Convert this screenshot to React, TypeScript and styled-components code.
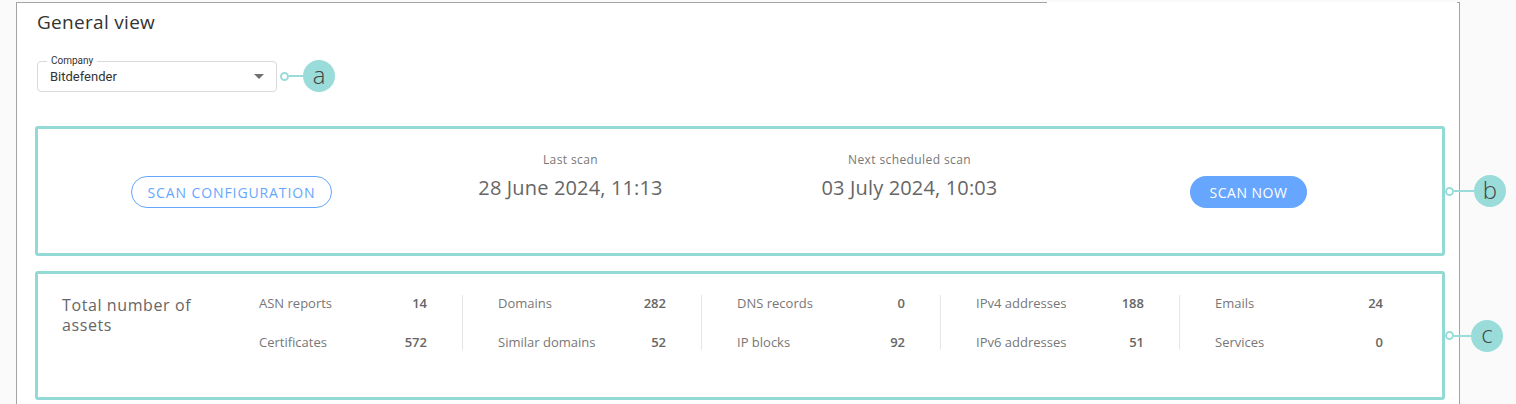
import React from "react";
import styled, { createGlobalStyle } from "styled-components";

const GlobalStyle = createGlobalStyle`
  html, body { margin: 0; padding: 0; background: #fafafa; }
  body { font-family: "Open Sans", "Liberation Sans", sans-serif; }
  * { box-sizing: border-box; }
`;

const Page = styled.div`
  padding: 2px 0 0 16px;
  height: 404px;
  overflow: hidden;
`;

const Panel = styled.section`
  position: relative;
  width: 1444px;
  min-height: 402px;
  background: #fff;
  border-left: 1px solid #a4a4a4;
  border-right: 1px solid #a4a4a4;
  padding: 8px 13px 0 18px;
  &::before {
    content: "";
    position: absolute;
    top: 0;
    left: -1px;
    width: 1031px;
    height: 1px;
    background: #a4a4a4;
  }
  &::after {
    content: "";
    position: absolute;
    top: 0;
    right: -1px;
    width: 3px;
    height: 1px;
    background: #a4a4a4;
  }
`;

const Title = styled.h1`
  margin: 0 0 0 2px;
  font-size: 19px;
  line-height: 24px;
  font-weight: 400;
  letter-spacing: 0.3px;
  color: #333;
`;

const SelectRow = styled.div`
  display: flex;
  align-items: center;
  margin: 26px 0 0 2px;
`;

const SelectBox = styled.div`
  position: relative;
  width: 240px;
  height: 31px;
  border: 1px solid #d9d9d9;
  border-radius: 4px;
  display: flex;
  align-items: center;
  padding: 0 12px;
  font-family: Roboto, "Liberation Sans", sans-serif;
`;

const SelectLabel = styled.span`
  position: absolute;
  top: -7px;
  left: 9px;
  padding: 0 4px;
  background: #fff;
  font-size: 10px;
  line-height: 12px;
  color: #333;
`;

const SelectValue = styled.span`
  flex: 1;
  font-size: 13px;
  color: #333;
  padding-top: 1px;
`;

const Caret = styled.span`
  width: 0;
  height: 0;
  border-left: 5px solid transparent;
  border-right: 5px solid transparent;
  border-top: 5px solid #707070;
`;

const CalloutWrap = styled.div<{ $abs?: boolean }>`
  display: flex;
  align-items: center;
  ${(p) =>
    p.$abs
      ? `position: absolute; left: 100%; top: 50%; transform: translateY(-50%); margin-left: 3px;`
      : `margin-left: 3px;`}
`;

const Dot = styled.span`
  width: 9px;
  height: 9px;
  border-radius: 50%;
  border: 2px solid #9adcd9;
  background: #fff;
`;

const Stem = styled.span<{ $w: number }>`
  width: ${(p) => p.$w}px;
  height: 2px;
  background: #9adcd9;
`;

const Badge = styled.span`
  width: 32px;
  height: 32px;
  border-radius: 50%;
  background: #9adcd9;
  color: #444;
  display: flex;
  align-items: center;
  justify-content: center;
  font-size: 24px;
  line-height: 1;
  font-weight: 300;
  padding-bottom: 3px;
`;

const Callout: React.FC<{ letter: string; stem: number; abs?: boolean }> = ({
  letter,
  stem,
  abs,
}) => (
  <CalloutWrap $abs={abs}>
    <Dot />
    <Stem $w={stem} />
    <Badge>{letter}</Badge>
  </CalloutWrap>
);

const Card = styled.div<{ $h: number; $mt: number }>`
  position: relative;
  width: 1410px;
  height: ${(p) => p.$h}px;
  margin-top: ${(p) => p.$mt}px;
  border: 3px solid #93d9d5;
  border-radius: 3px;
`;

const ScanGrid = styled.div`
  display: grid;
  grid-template-columns: repeat(4, 1fr);
  padding: 23px 24px 0;
  justify-items: center;
  align-items: start;
  height: 100%;
`;

const PillButton = styled.button<{ $filled?: boolean; $w: number }>`
  margin-top: 24px;
  height: 32px;
  width: ${(p) => p.$w}px;
  border-radius: 16px;
  border: ${(p) => (p.$filled ? "none" : "1px solid #66a6ff")};
  background: ${(p) => (p.$filled ? "#66a6ff" : "#fff")};
  color: ${(p) => (p.$filled ? "#fff" : "#66a6ff")};
  font-family: inherit;
  font-size: 14px;
  letter-spacing: ${(p) => (p.$filled ? "0.5px" : "0.9px")};
  text-transform: uppercase;
  padding: 0;
`;

const ScanInfo = styled.div`
  display: flex;
  flex-direction: column;
  align-items: center;
`;

const ScanLabel = styled.div`
  font-size: 12px;
  line-height: 16px;
  letter-spacing: 0.4px;
  color: #777;
`;

const ScanDate = styled.div`
  margin-top: 8px;
  font-size: 20px;
  line-height: 24px;
  letter-spacing: 0.15px;
  color: #666;
`;

const AssetsRow = styled.div`
  display: flex;
  padding: 21px 24px 0 24px;
`;

const AssetsTitle = styled.div`
  width: 197px;
  font-size: 16px;
  line-height: 20px;
  letter-spacing: 0.6px;
  color: #666;
  padding-right: 40px;
`;

const AssetCol = styled.div<{ $first?: boolean }>`
  display: flex;
  flex-direction: column;
  gap: 23px;
  padding: ${(p) => (p.$first ? "0 35px 0 0" : "0 35px")};
  border-left: ${(p) => (p.$first ? "none" : "1px solid #e6e6e6")};
  width: ${(p) => (p.$first ? 203 : 239)}px;
`;

const AssetItem = styled.div`
  display: flex;
  justify-content: space-between;
  font-size: 13px;
  line-height: 16px;
`;

const AssetName = styled.span`
  color: #777;
`;

const AssetValue = styled.span`
  color: #666;
  font-weight: 600;
`;

const assets: [string, number][][] = [
  [
    ["ASN reports", 14],
    ["Certificates", 572],
  ],
  [
    ["Domains", 282],
    ["Similar domains", 52],
  ],
  [
    ["DNS records", 0],
    ["IP blocks", 92],
  ],
  [
    ["IPv4 addresses", 188],
    ["IPv6 addresses", 51],
  ],
  [
    ["Emails", 24],
    ["Services", 0],
  ],
];

export default function App() {
  return (
    <>
      <GlobalStyle />
      <Page>
        <Panel>
          <Title>General view</Title>
          <SelectRow>
            <SelectBox>
              <SelectLabel>Company</SelectLabel>
              <SelectValue>Bitdefender</SelectValue>
              <Caret />
            </SelectBox>
            <Callout letter="a" stem={14} />
          </SelectRow>

          <Card $h={130} $mt={34}>
            <ScanGrid>
              <PillButton $w={201}>Scan configuration</PillButton>
              <ScanInfo>
                <ScanLabel>Last scan</ScanLabel>
                <ScanDate>28 June 2024, 11:13</ScanDate>
              </ScanInfo>
              <ScanInfo>
                <ScanLabel>Next scheduled scan</ScanLabel>
                <ScanDate>03 July 2024, 10:03</ScanDate>
              </ScanInfo>
              <PillButton $w={117} $filled>
                Scan now
              </PillButton>
            </ScanGrid>
            <Callout letter="b" stem={20} abs />
          </Card>

          <Card $h={129} $mt={15}>
            <AssetsRow>
              <AssetsTitle>Total number of assets</AssetsTitle>
              {assets.map((col, i) => (
                <AssetCol key={i} $first={i === 0}>
                  {col.map(([name, value]) => (
                    <AssetItem key={name}>
                      <AssetName>{name}</AssetName>
                      <AssetValue>{value}</AssetValue>
                    </AssetItem>
                  ))}
                </AssetCol>
              ))}
            </AssetsRow>
            <Callout letter="c" stem={17} abs />
          </Card>
        </Panel>
      </Page>
    </>
  );
}
